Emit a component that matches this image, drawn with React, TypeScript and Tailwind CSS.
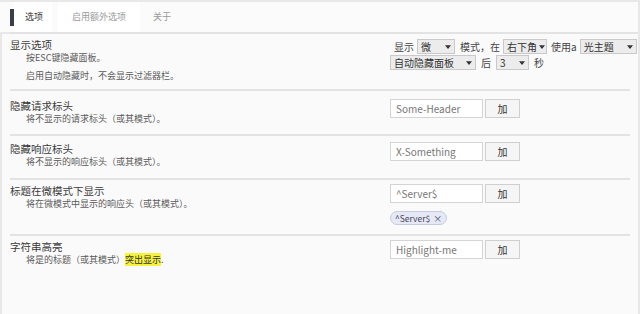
import React from 'react';

const font = { fontFamily: '"Noto Sans CJK SC", "Open Sans", sans-serif' };

const FakeSelect: React.FC<{ value: string; width: string }> = ({ value, width }) => (
  <div
    className={`flex shrink-0 items-center justify-between h-[15px] ${width} border border-[#c9c9c9] bg-[#ececec] px-[3px] text-[10px] text-[#333] leading-none whitespace-nowrap`}
  >
    <span>{value}</span>
    <svg viewBox="0 0 8 5" className="w-[6px] h-[4px] shrink-0 ml-[2px]">
      <path d="M0 0h8L4 5z" fill="#333" />
    </svg>
  </div>
);

const AddRow: React.FC<{ placeholder: string }> = ({ placeholder }) => (
  <div className="flex items-center gap-[2px]">
    <div className="flex items-center w-[93px] h-[19px] border border-[#d4d4d4] bg-white px-[5px] text-[10px] text-[#777] leading-none">
      {placeholder}
    </div>
    <div className="flex items-center justify-center w-[35px] h-[19px] border border-[#cfcfcf] bg-[#f5f5f5] text-[10px] text-[#333] leading-none">
      加
    </div>
  </div>
);

interface SectionProps {
  title: string;
  desc: React.ReactNode;
  extra?: React.ReactNode;
  right: React.ReactNode;
  height: string;
  pad: string;
}

const Section: React.FC<SectionProps> = ({ title, desc, extra, right, height, pad }) => (
  <div className={`flex ${height} ${pad} border-b-2 border-[#e3e3e3]`}>
    <div className="flex-1">
      <div className="text-[10.5px] text-[#3a3a3a] leading-[13px]">{title}</div>
      <div className="pl-[16px] text-[9px] text-[#5a5a5a] leading-[13px]">{desc}</div>
      {extra}
    </div>
    <div className="w-[240px] shrink-0">{right}</div>
  </div>
);

export default function App() {
  return (
    <div style={font} className="w-[640px] h-[314px] bg-[#e8e8e8] pt-[2px] pr-[2px] overflow-hidden">
      {/* Tabs */}
      <div className="flex items-center h-[30px] bg-[#fbfbfb] pl-[10px]">
        <div className="w-[4px] h-[17px] bg-[#3a3f47]" />
        <div className="flex items-center h-[30px] pl-[11px] pr-[9px] bg-white text-[9px] text-[#333]">选项</div>
        <div className="flex items-center h-[30px] px-[14px] ml-[6px] bg-white text-[9px] text-[#999]">启用额外选项</div>
        <div className="flex items-center h-[30px] px-[13px] text-[9px] text-[#999]">关于</div>
      </div>
      <div className="h-[2px] bg-[#e3e3e3] ml-[10px]" />

      {/* Content */}
      <div className="h-[280px] ml-[2px] bg-[#fafafa] px-[8px]">
        <Section
          height="h-[57px]"
          pad="pt-[4px]"
          title="显示选项"
          desc="按ESC键隐藏面板。"
          extra={
            <div className="pl-[16px] pt-[5px] text-[9px] text-[#5a5a5a] leading-[13px]">
              启用自动隐藏时，不会显示过滤器栏。
            </div>
          }
          right={
            <div className="flex flex-col gap-[1px] pt-[1px] text-[10px] text-[#444] whitespace-nowrap">
              <div className="flex items-center gap-[3px] pl-[4px]">
                <span className="shrink-0">显示</span>
                <FakeSelect value="微" width="w-[38px]" />
                <span className="shrink-0 ml-[2px]">模式，在</span>
                <FakeSelect value="右下角" width="w-[44px]" />
                <span className="shrink-0 ml-[1px]">使用a</span>
                <FakeSelect value="光主题" width="w-[57px]" />
              </div>
              <div className="flex items-center gap-[5px]">
                <FakeSelect value="自动隐藏面板" width="w-[86px]" />
                <span>后</span>
                <FakeSelect value="3" width="w-[33px]" />
                <span>秒</span>
              </div>
            </div>
          }
        />
        <Section
          height="h-[45px]"
          pad="pt-[8px]"
          title="隐藏请求标头"
          desc="将不显示的请求标头（或其模式）。"
          right={<AddRow placeholder="Some-Header" />}
        />
        <Section
          height="h-[44px]"
          pad="pt-[6px]"
          title="隐藏响应标头"
          desc="将不显示的响应标头（或其模式）。"
          right={<AddRow placeholder="X-Something" />}
        />
        <Section
          height="h-[56px]"
          pad="pt-[4px]"
          title="标题在微模式下显示"
          desc="将在微模式中显示的响应头（或其模式）。"
          right={
            <div>
              <AddRow placeholder="^Server$" />
              <div className="mt-[3px] inline-flex items-center gap-[3px] h-[14px] px-[4px] rounded-full border border-[#c5cbe0] bg-[#e6e9f5] text-[8.5px] text-[#445] leading-none">
                ^Server$ <span className="text-[9px]">×</span>
              </div>
            </div>
          }
        />
        <div className="flex pt-[4px]">
          <div className="flex-1">
            <div className="text-[10.5px] text-[#3a3a3a] leading-[13px]">字符串高亮</div>
            <div className="pl-[16px] text-[9px] text-[#5a5a5a] leading-[13px]">
              将是的标题（或其模式）
              <span className="bg-[#f6f33a] text-[#333]">突出显示</span>.
            </div>
          </div>
          <div className="w-[240px] shrink-0">
            <AddRow placeholder="Highlight-me" />
          </div>
        </div>
      </div>
    </div>
  );
}
